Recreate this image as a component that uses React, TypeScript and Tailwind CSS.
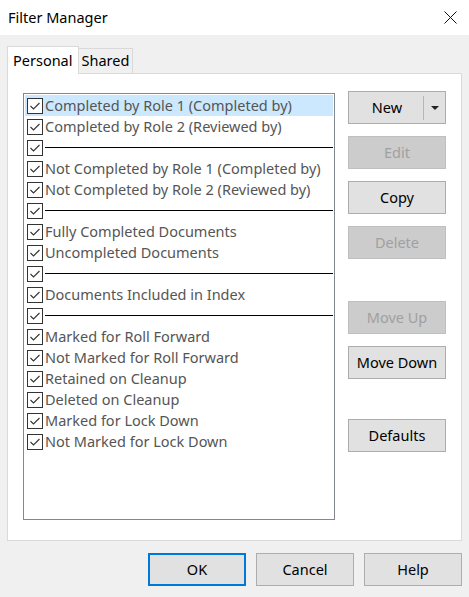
import React from "react";

const font = { fontFamily: '"Noto Sans", "Open Sans", Arial, sans-serif' };

type Row = { label?: string; sep?: boolean };

const rows: Row[] = [
  { label: "Completed by Role 1 (Completed by)" },
  { label: "Completed by Role 2 (Reviewed by)" },
  { sep: true },
  { label: "Not Completed by Role 1 (Completed by)" },
  { label: "Not Completed by Role 2 (Reviewed by)" },
  { sep: true },
  { label: "Fully Completed Documents" },
  { label: "Uncompleted Documents" },
  { sep: true },
  { label: "Documents Included in Index" },
  { sep: true },
  { label: "Marked for Roll Forward" },
  { label: "Not Marked for Roll Forward" },
  { label: "Retained on Cleanup" },
  { label: "Deleted on Cleanup" },
  { label: "Marked for Lock Down" },
  { label: "Not Marked for Lock Down" },
];

function Check() {
  return (
    <div className="w-[16px] h-[16px] border border-[#333] bg-white shrink-0 flex items-center justify-center">
      <svg width="14" height="14" viewBox="0 0 14 14">
        <path d="M2.5 7 L5.5 10 L11.5 4" fill="none" stroke="#333" strokeWidth="1.1" />
      </svg>
    </div>
  );
}

function Btn({ children, disabled, focus, className = "" }: { children: React.ReactNode; disabled?: boolean; focus?: boolean; className?: string }) {
  const base = disabled
    ? "bg-[#cccccc] border-[#bfbfbf] text-[#a0a0a0]"
    : focus
    ? "bg-[#e1e1e1] border-[#0078d7] border-2 text-black"
    : "bg-[#e1e1e1] border-[#adadad] text-black";
  return (
    <div className={`w-[98px] h-[33px] border flex items-center justify-center text-[14.5px] ${base} ${className}`}>
      {children}
    </div>
  );
}

export default function App() {
  return (
    <div className="w-[469px] h-[597px] bg-[#f0f0f0] flex flex-col overflow-hidden" style={font}>
      {/* title bar */}
      <div className="h-[35px] bg-white flex items-center justify-between pl-[8px] pr-[12px] shrink-0">
        <span className="text-[14.5px] text-black">Filter Manager</span>
        <svg width="13" height="13" viewBox="0 0 13 13">
          <path d="M0.5 0.5 L12.5 12.5 M12.5 0.5 L0.5 12.5" stroke="#111" strokeWidth="1" />
        </svg>
      </div>

      <div className="pl-[7px] pt-[11px] w-[462px]">
        {/* tabs */}
        <div className="flex items-end h-[27px] relative z-10">
          <div className="h-[28px] px-[5px] bg-white border border-b-0 border-[#d9d9d9] flex items-center text-[14.5px] text-black -mb-px">
            Personal
          </div>
          <div className="h-[25px] px-[3px] bg-[#f0f0f0] border border-l-0 border-b-0 border-[#d9d9d9] flex items-center text-[14.5px] text-black">
            Shared
          </div>
        </div>

        {/* panel */}
        <div className="h-[468px] bg-white border border-[#d9d9d9] flex pl-[15px] pt-[19px] gap-[13px]">
          <div className="w-[312px] h-[427px] border border-[#828790] pt-[1px] pl-[1px] pr-[1px]">
            {rows.map((r, i) => (
              <div key={i} className={`h-[21px] flex items-center pl-[2px] ${i === 0 ? "bg-[#cce8ff]" : ""}`}>
                <Check />
                {r.sep ? (
                  <div className="flex-1 h-px bg-black ml-[2px]" />
                ) : (
                  <span className="ml-[2px] text-[14.5px] text-[#555] whitespace-nowrap">{r.label}</span>
                )}
              </div>
            ))}
          </div>

          <div className="flex flex-col -mt-[2px]">
            <div className="w-[98px] h-[33px] border border-[#adadad] bg-[#e1e1e1] flex items-center text-[14.5px] text-black">
              <span className="flex-1 text-center pl-[2px]">New</span>
              <div className="w-px h-[24px] bg-[#b5b5b5]" />
              <div className="w-[21px] flex justify-center">
                <svg width="8" height="4" viewBox="0 0 8 4"><path d="M0 0 L8 0 L4 4 Z" fill="#222" /></svg>
              </div>
            </div>
            <Btn disabled className="mt-[12px]">Edit</Btn>
            <Btn className="mt-[12px]">Copy</Btn>
            <Btn disabled className="mt-[12px]">Delete</Btn>
            <Btn disabled className="mt-[42px]">Move Up</Btn>
            <Btn className="mt-[12px]">Move Down</Btn>
            <Btn className="mt-[40px]">Defaults</Btn>
          </div>
        </div>
      </div>

      {/* bottom buttons */}
      <div className="flex gap-[10px] pl-[148px] pt-[12px]">
        <Btn focus>OK</Btn>
        <Btn>Cancel</Btn>
        <Btn>Help</Btn>
      </div>
    </div>
  );
}
